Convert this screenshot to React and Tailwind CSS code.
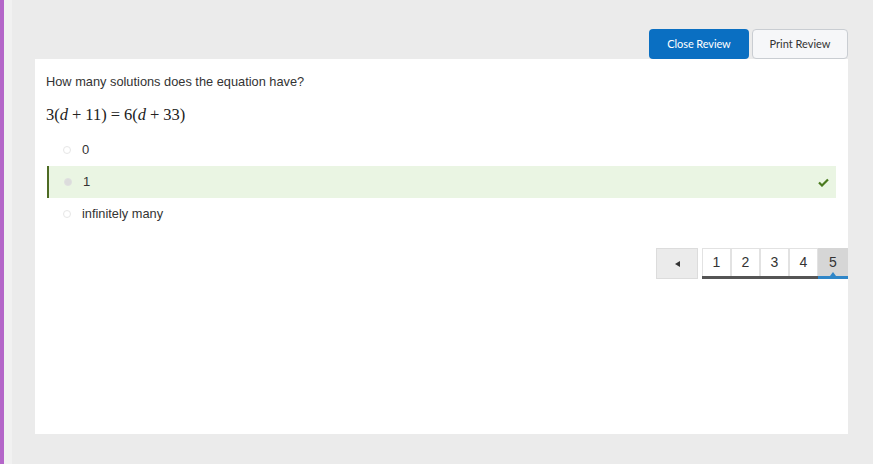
import React from "react";

export default function App() {
  const pages = [1, 2, 3, 4, 5];
  return (
    <div className="flex h-[464px] w-[873px] bg-[#ebebeb] overflow-hidden" style={{ fontFamily: '"Liberation Sans", Arial, sans-serif' }}>
      <div className="w-[4px] shrink-0 bg-[#b466c9]" />
      <div className="w-[8px] shrink-0 bg-[#f1f1f1]" />
      <div className="flex flex-col pl-[23px] w-[837px]">
        <div className="flex justify-end gap-[3px] pt-[29px] pr-[1px]">
          <button className="h-[30px] w-[100px] rounded-[4px] bg-[#0a6fc2] text-white text-[11px] tracking-[-0.1px]" style={{ fontFamily: 'Lato, sans-serif' }}>
            Close Review
          </button>
          <button className="h-[30px] w-[96px] rounded-[4px] bg-[#f6f7f9] border border-[#c9cdd2] text-[#333] text-[11px]" style={{ fontFamily: 'Lato, sans-serif' }}>
            Print Review
          </button>
        </div>
        <div className="mt-0 h-[375px] w-[813px] bg-white pl-[11px] pr-[12px] pt-[13px] flex flex-col">
          <div className="text-[12.8px] leading-[20px] text-[#333]">How many solutions does the equation have?</div>
          <div className="mt-[13px] h-[20px] leading-[20px] text-[#222] flex items-center" style={{ fontFamily: '"Liberation Serif", "DejaVu Serif", serif', fontSize: '16.5px' }}>
            <span>3(</span><i>d</i><span className="mx-[4px]">+</span><span>11)</span><span className="mx-[4px]">=</span><span>6(</span><i>d</i><span className="mx-[4px]">+</span><span>33)</span>
          </div>
          <div className="mt-[9px] flex flex-col">
            <div className="h-[32px] flex items-center pl-[17px] text-[13px] text-[#333]">
              <span className="w-[8px] h-[8px] rounded-full border border-[#e6e6e6] mr-[11px]" />
              0
            </div>
            <div className="h-[32px] flex items-center pl-[15px] text-[13px] text-[#333] bg-[#eaf5e3] border-l-2 border-[#4d6b23] ml-[1px]">
              <span className="w-[8px] h-[8px] rounded-full bg-[#dcdcdc] border border-[#e0e0e0] mr-[11px]" />
              1
              <svg className="ml-auto mr-[7px]" width="11" height="9" viewBox="0 0 11 9">
                <path d="M1 4.5 L4 7.5 L10 1.5" fill="none" stroke="#4a7a1e" strokeWidth="2.2" />
              </svg>
            </div>
            <div className="h-[32px] flex items-center pl-[17px] text-[12.8px] text-[#333]">
              <span className="w-[8px] h-[8px] rounded-full border border-[#e6e6e6] mr-[11px]" />
              infinitely many
            </div>
          </div>
          <div className="mt-[18px] flex justify-end mr-[-12px]">
            <button className="h-[31px] w-[42px] bg-[#ebebeb] border border-[#dcdcdc] flex items-center justify-center mr-[4px]">
              <svg width="5" height="6" viewBox="0 0 5 6"><path d="M5 0 L0 3 L5 6 Z" fill="#333" /></svg>
            </button>
            <div className="flex border-b-[3px] border-[#555] h-[31px]">
              {pages.map((p) => (
                <div
                  key={p}
                  className={
                    p === 5
                      ? "relative w-[30px] h-[31px] -mb-[3px] bg-[#d6d6d6] border-b-[3px] border-[#2f86c8] flex items-center justify-center text-[14px] text-[#333]"
                      : "w-[29px] h-[28px] bg-white border border-[#e2e2e2] border-b-0 flex items-center justify-center text-[14px] text-[#333]"
                  }
                >
                  {p}
                  {p === 5 && (
                    <span className="absolute bottom-0 left-[12px] w-0 h-0 border-l-[3px] border-r-[3px] border-b-[4px] border-l-transparent border-r-transparent border-b-[#2f86c8]" />
                  )}
                </div>
              ))}
            </div>
          </div>
        </div>
      </div>
    </div>
  );
}
